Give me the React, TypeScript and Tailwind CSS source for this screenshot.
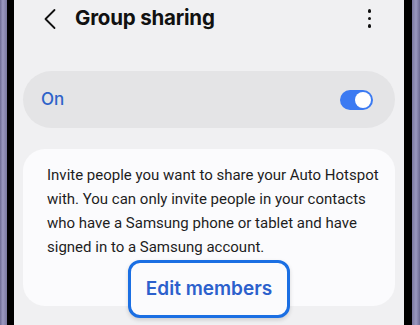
function Bezel({ side }: { side: "left" | "right" }) {
  // phone frame edge: purple metal strip + black bezel
  return side === "left" ? (
    <div className="flex h-full shrink-0">
      <div className="w-[7px] bg-[linear-gradient(90deg,#6e6c94,#9a98c0_40%,#7a789f)]" />
      <div className="w-[7px] bg-black" />
    </div>
  ) : (
    <div className="flex h-full shrink-0">
      <div className="w-[8px] bg-black" />
      <div className="w-[8px] bg-[linear-gradient(90deg,#7a789f,#9a98c0_50%,#6e6c94)]" />
    </div>
  );
}

export default function App() {
  return (
    <div className="flex h-[325px] w-[420px] overflow-hidden bg-black font-['Inter',sans-serif]">
      <Bezel side="left" />
      <div className="flex flex-1 flex-col bg-[#f0f0f2] px-[9px]">
        <div className="flex h-[37px] items-center pl-[20px] pr-[24px]">
          <svg width="14" height="22" viewBox="0 0 14 22" fill="none">
            <path d="M11.5 2 L2.5 11 L11.5 20" stroke="#111" strokeWidth="1.8" strokeLinecap="round" strokeLinejoin="round" />
          </svg>
          <div className="ml-[18px] text-[20.5px] font-bold tracking-[-0.2px] text-[#111]">
            Group sharing
          </div>
          <div className="ml-auto flex flex-col gap-[4px]">
            <span className="h-[3.5px] w-[3.5px] rounded-full bg-[#111]" />
            <span className="h-[3.5px] w-[3.5px] rounded-full bg-[#111]" />
            <span className="h-[3.5px] w-[3.5px] rounded-full bg-[#111]" />
          </div>
        </div>

        <div className="mt-[34px] flex h-[57px] items-center rounded-full bg-[#e4e4e6] pl-[18px] pr-[22px]">
          <div className="text-[17px] font-medium text-[#2e63c9]">On</div>
          <div className="ml-auto flex h-[20px] w-[33px] items-center justify-end rounded-full bg-[#3b7af2] pr-[2px]">
            <span className="h-[16px] w-[16px] rounded-full bg-white" />
          </div>
        </div>

        <div className="mt-[21px] flex h-[157px] flex-col rounded-[22px] bg-[#fbfbfd] pl-[24px] pr-[12px] pt-[14px]">
          <p className="font-['Roboto',sans-serif] text-[15px] leading-[24px] text-[#1e1e1e]">
            Invite people you want to share your Auto Hotspot with. You can only invite people in your contacts who have a Samsung phone or tablet and have signed in to a Samsung account.
          </p>
          <div className="mt-[1px] flex justify-start pl-[81px]">
            <div className="flex h-[58px] w-[162px] items-center justify-center rounded-[12px] border-[3px] border-[#1b6fe3] bg-[#fbfbfd] shadow-[0_2px_4px_rgba(0,0,0,0.15)]">
              <span className="text-[19px] font-semibold text-[#2c60cc]">Edit members</span>
            </div>
          </div>
        </div>
      </div>
      <Bezel side="right" />
    </div>
  );
}
